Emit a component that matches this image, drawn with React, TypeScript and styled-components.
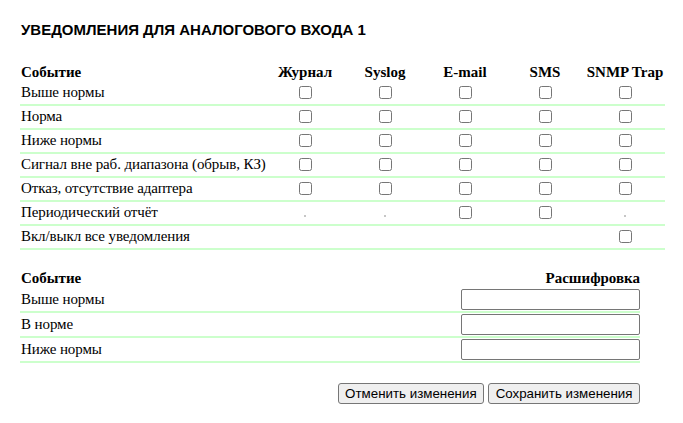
import React from "react";
import styled, { createGlobalStyle } from "styled-components";

const GlobalStyle = createGlobalStyle`
  html, body { margin: 0; padding: 0; background: #fff; }
  body { font-family: "Liberation Serif", "Times New Roman", serif; font-size: 15px; color: #000; }
`;

const Page = styled.div`
  padding: 21px 0 20px 20px;
  width: 645px;
`;

const Title = styled.h1`
  margin: 0 0 23px 1px;
  font-family: "Liberation Sans", Arial, sans-serif;
  font-weight: 700;
  font-size: 15px;
  line-height: 18px;
`;

const NotifyGrid = styled.div`
  width: 645px;
`;

const NotifyRow = styled.div<{ $header?: boolean }>`
  display: grid;
  grid-template-columns: 245px repeat(5, 80px);
  align-items: center;
  height: 20px;
  line-height: 17px;
  padding-bottom: ${(p) => (p.$header ? "0" : "2px")};
  border-bottom: ${(p) => (p.$header ? "none" : "2px solid #ccffcc")};
`;

const HeadCell = styled.div<{ $center?: boolean; $right?: boolean }>`
  font-weight: 700;
  text-align: ${(p) => (p.$center ? "center" : p.$right ? "right" : "left")};
  padding-left: ${(p) => (p.$center || p.$right ? "0" : "1px")};
  white-space: nowrap;
`;

const LabelCell = styled.div`
  padding-left: 1px;
  letter-spacing: -0.1px;
  white-space: nowrap;
`;

const BoxCell = styled.div`
  display: flex;
  justify-content: center;
  align-items: center;
`;

const Check = styled.input.attrs({ type: "checkbox" })`
  margin: 0;
  width: 13px;
  height: 13px;
`;

const Dot = styled.span`
  display: block;
  width: 2px;
  height: 2px;
  background: #c6c6c6;
  margin-top: 8px;
`;

const MeaningGrid = styled.div`
  width: 620px;
  margin-top: 18px;
`;

const MeaningRow = styled.div<{ $header?: boolean }>`
  display: grid;
  grid-template-columns: 1fr auto;
  align-items: center;
  height: ${(p) => (p.$header ? "20px" : "23px")};
  line-height: 17px;
  border-bottom: ${(p) => (p.$header ? "none" : "2px solid #ccffcc")};
`;

const TextField = styled.input.attrs({ type: "text" })`
  box-sizing: border-box;
  width: 179px;
  height: 21px;
  margin: 0;
  border: 1px solid #767676;
  border-radius: 2px;
  padding: 1px 2px;
  font-family: "Liberation Sans", Arial, sans-serif;
  font-size: 13.33px;
`;

const Actions = styled.div`
  width: 620px;
  display: flex;
  justify-content: flex-end;
  gap: 4px;
  margin-top: 20px;
`;

const Button = styled.button`
  box-sizing: border-box;
  height: 21px;
  margin: 0;
  padding: 1px 6.5px;
  font-family: "Liberation Sans", Arial, sans-serif;
  font-size: 13.33px;
  color: #000;
  background: #efefef;
  border: 1px solid #767676;
  border-radius: 3px;
`;

type Cell = "box" | "dot" | "none";

const channels = ["Журнал", "Syslog", "E-mail", "SMS", "SNMP Trap"];

const events: { label: string; cells: Cell[] }[] = [
  { label: "Выше нормы", cells: ["box", "box", "box", "box", "box"] },
  { label: "Норма", cells: ["box", "box", "box", "box", "box"] },
  { label: "Ниже нормы", cells: ["box", "box", "box", "box", "box"] },
  { label: "Сигнал вне раб. диапазона (обрыв, КЗ)", cells: ["box", "box", "box", "box", "box"] },
  { label: "Отказ, отсутствие адаптера", cells: ["box", "box", "box", "box", "box"] },
  { label: "Периодический отчёт", cells: ["dot", "dot", "box", "box", "dot"] },
  { label: "Вкл/выкл все уведомления", cells: ["none", "none", "none", "none", "box"] },
];

const meanings = ["Выше нормы", "В норме", "Ниже нормы"];

export default function App() {
  return (
    <>
      <GlobalStyle />
      <Page>
        <Title>УВЕДОМЛЕНИЯ ДЛЯ АНАЛОГОВОГО ВХОДА 1</Title>
        <NotifyGrid>
          <NotifyRow $header>
            <HeadCell>Событие</HeadCell>
            {channels.map((c) => (
              <HeadCell key={c} $center>
                {c}
              </HeadCell>
            ))}
          </NotifyRow>
          {events.map((e) => (
            <NotifyRow key={e.label}>
              <LabelCell>{e.label}</LabelCell>
              {e.cells.map((c, i) => (
                <BoxCell key={i}>
                  {c === "box" && <Check />}
                  {c === "dot" && <Dot />}
                </BoxCell>
              ))}
            </NotifyRow>
          ))}
        </NotifyGrid>
        <MeaningGrid>
          <MeaningRow $header>
            <HeadCell>Событие</HeadCell>
            <HeadCell $right>Расшифровка</HeadCell>
          </MeaningRow>
          {meanings.map((m) => (
            <MeaningRow key={m}>
              <LabelCell>{m}</LabelCell>
              <TextField />
            </MeaningRow>
          ))}
        </MeaningGrid>
        <Actions>
          <Button>Отменить изменения</Button>
          <Button>Сохранить изменения</Button>
        </Actions>
      </Page>
    </>
  );
}
